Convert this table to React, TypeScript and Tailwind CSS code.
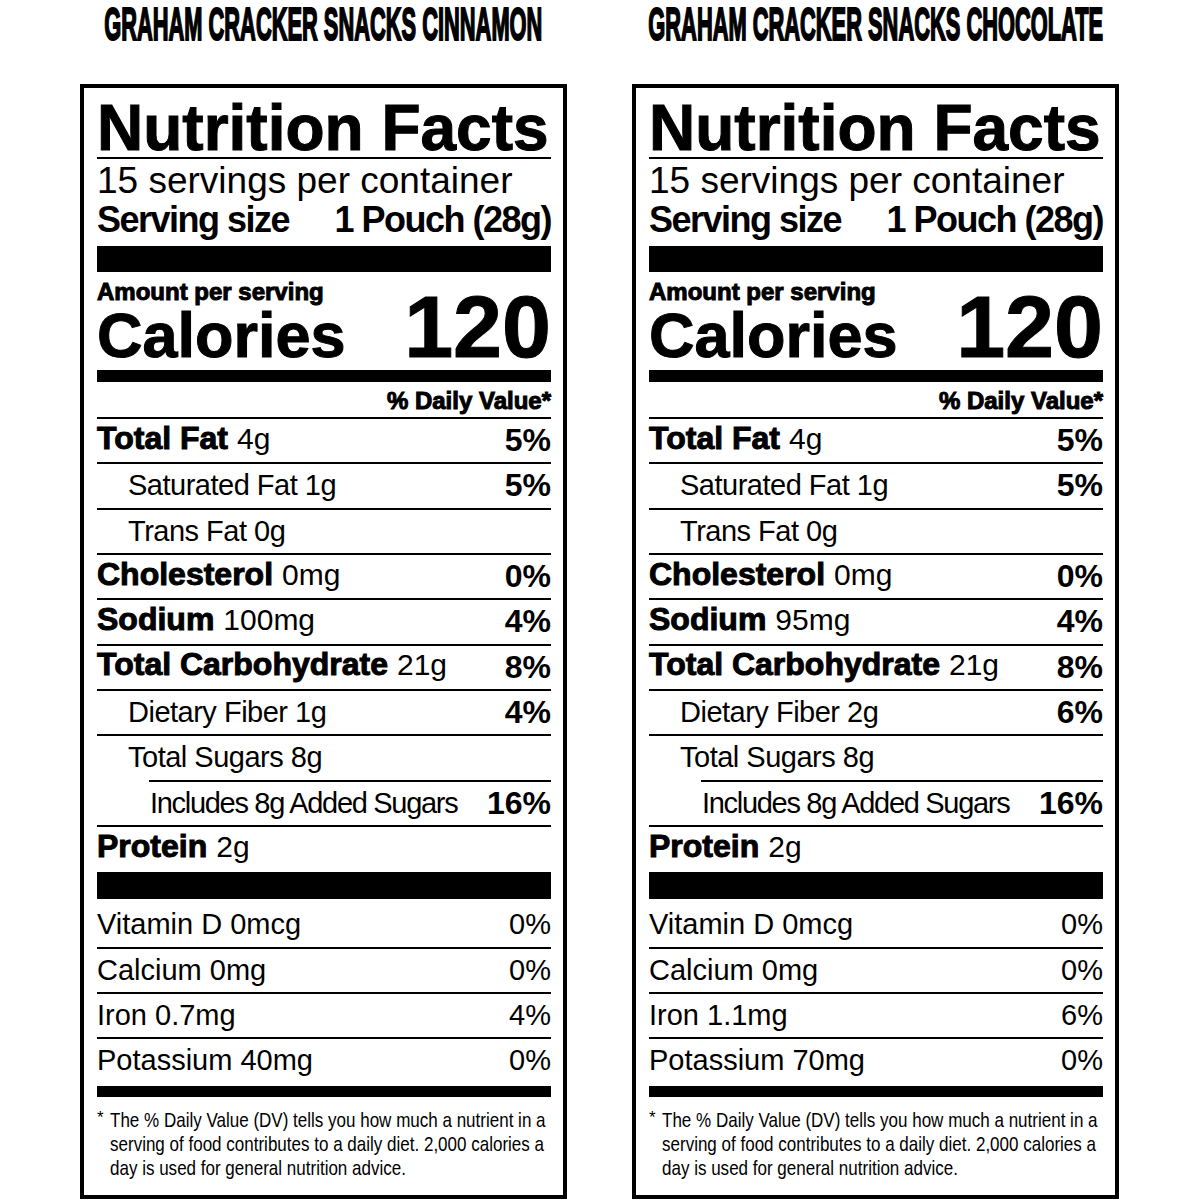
const font = "font-['Liberation_Sans',Arial,sans-serif]";
const heavy = '[-webkit-text-stroke:1px_black]';

type Label = {
  title: string;
  sodium: string;
  fiber: string;
  fiberDv: string;
  iron: string;
  ironDv: string;
  potassium: string;
};

const labels: Label[] = [
  {
    title: 'GRAHAM CRACKER SNACKS CINNAMON',
    sodium: '100mg',
    fiber: '1g',
    fiberDv: '4%',
    iron: '0.7mg',
    ironDv: '4%',
    potassium: '40mg',
  },
  {
    title: 'GRAHAM CRACKER SNACKS CHOCOLATE',
    sodium: '95mg',
    fiber: '2g',
    fiberDv: '6%',
    iron: '1.1mg',
    ironDv: '6%',
    potassium: '70mg',
  },
];

function Line({ indent }: { indent?: boolean }) {
  return <div className={`h-[2px] bg-black ${indent ? 'ml-[52px]' : ''}`} />;
}

function MainRow({ name, amount, dv }: { name: string; amount: string; dv?: string }) {
  return (
    <div className="h-[43.33px] flex items-center justify-between leading-[43px] whitespace-nowrap">
      <div>
        <span className={`text-[32px] font-bold ${heavy}`}>{name}</span>
        <span className="text-[30px] ml-[9px]">{amount}</span>
      </div>
      {dv && <span className="text-[32px] font-bold">{dv}</span>}
    </div>
  );
}

function SubRow({ text, dv, pad, tight }: { text: string; dv?: string; pad: string; tight?: boolean }) {
  return (
    <div className={`h-[43.33px] flex items-center justify-between leading-[43px] whitespace-nowrap ${pad}`}>
      <span className={`text-[29px] ${tight ? 'tracking-[-1.3px]' : 'tracking-[-0.5px]'}`}>{text}</span>
      {dv && <span className="text-[32px] font-bold">{dv}</span>}
    </div>
  );
}

function VitRow({ text, dv, h }: { text: string; dv: string; h: string }) {
  return (
    <div className={`${h} flex items-center justify-between whitespace-nowrap text-[29px]`}>
      <span>{text}</span>
      <span>{dv}</span>
    </div>
  );
}

function NutritionLabel({ data }: { data: Label }) {
  return (
    <div className="w-[487px] flex flex-col">
      <div className="h-[84px] flex justify-center pt-[1px]">
        <span className="whitespace-nowrap text-[46px] leading-[46px] font-bold scale-x-[0.475] [-webkit-text-stroke:2px_black]">
          {data.title}
        </span>
      </div>
      <div className="h-[1115px] border-4 border-black pl-[13px] pr-[12px] flex flex-col text-black">
        <div className={`h-[69px] pt-[8px] text-[64px] leading-[64px] font-bold whitespace-nowrap ${heavy}`}>
          Nutrition Facts
        </div>
        <Line />
        <div className="pt-[3px] text-[37px] leading-[37px] whitespace-nowrap">15 servings per container</div>
        <div className="pt-[3px] flex justify-between text-[36px] leading-[36px] font-bold tracking-[-1.5px] whitespace-nowrap">
          <span>Serving size</span>
          <span>1 Pouch (28g)</span>
        </div>
        <div className="mt-[8px] h-[26px] bg-black" />
        <div className="pt-[8px] flex justify-between items-end">
          <div className="flex flex-col whitespace-nowrap">
            <span className={`text-[24px] leading-[24px] font-bold ${heavy}`}>Amount per serving</span>
            <span className={`text-[63px] leading-[63px] font-bold ${heavy}`}>Calories</span>
          </div>
          <span className={`text-[88px] leading-[80px] font-bold ${heavy}`}>120</span>
        </div>
        <div className="mt-[3px] h-[12px] bg-black" />
        <div className={`h-[35px] pt-[7px] text-right text-[24px] leading-[24px] font-bold ${heavy}`}>
          % Daily Value*
        </div>
        <Line />
        <MainRow name="Total Fat" amount="4g" dv="5%" />
        <Line />
        <SubRow text="Saturated Fat 1g" dv="5%" pad="pl-[31px]" />
        <Line />
        <SubRow text="Trans Fat 0g" pad="pl-[31px]" />
        <Line />
        <MainRow name="Cholesterol" amount="0mg" dv="0%" />
        <Line />
        <MainRow name="Sodium" amount={data.sodium} dv="4%" />
        <Line />
        <MainRow name="Total Carbohydrate" amount="21g" dv="8%" />
        <Line />
        <SubRow text={`Dietary Fiber ${data.fiber}`} dv={data.fiberDv} pad="pl-[31px]" />
        <Line />
        <SubRow text="Total Sugars 8g" pad="pl-[31px]" />
        <Line indent />
        <SubRow text="Includes 8g Added Sugars" dv="16%" pad="pl-[53px]" tight />
        <Line />
        <MainRow name="Protein" amount="2g" />
        <div className="mt-[1.7px] h-[27px] bg-black" />
        <VitRow text="Vitamin D 0mcg" dv="0%" h="h-[48px] pt-[4px]" />
        <Line />
        <VitRow text="Calcium 0mg" dv="0%" h="h-[43px]" />
        <Line />
        <VitRow text={`Iron ${data.iron}`} dv={data.ironDv} h="h-[43px]" />
        <Line />
        <VitRow text={`Potassium ${data.potassium}`} dv="0%" h="h-[47px] pb-[4px]" />
        <div className="h-[11px] bg-black" />
        <div className="pt-[11px] flex">
          <span className="w-[13px] shrink-0 text-[17px] leading-[20px]">*</span>
          <div className="origin-left scale-x-[0.81] whitespace-nowrap text-[21px] leading-[24px]">
            <div>The % Daily Value (DV) tells you how much a nutrient in a</div>
            <div>serving of food contributes to a daily diet. 2,000 calories a</div>
            <div>day is used for general nutrition advice.</div>
          </div>
        </div>
      </div>
    </div>
  );
}

export default function App() {
  return (
    <div className={`w-[1200px] h-[1200px] bg-white overflow-hidden flex gap-[65px] pl-[80px] text-black ${font}`}>
      {labels.map((l) => (
        <NutritionLabel key={l.title} data={l} />
      ))}
    </div>
  );
}
